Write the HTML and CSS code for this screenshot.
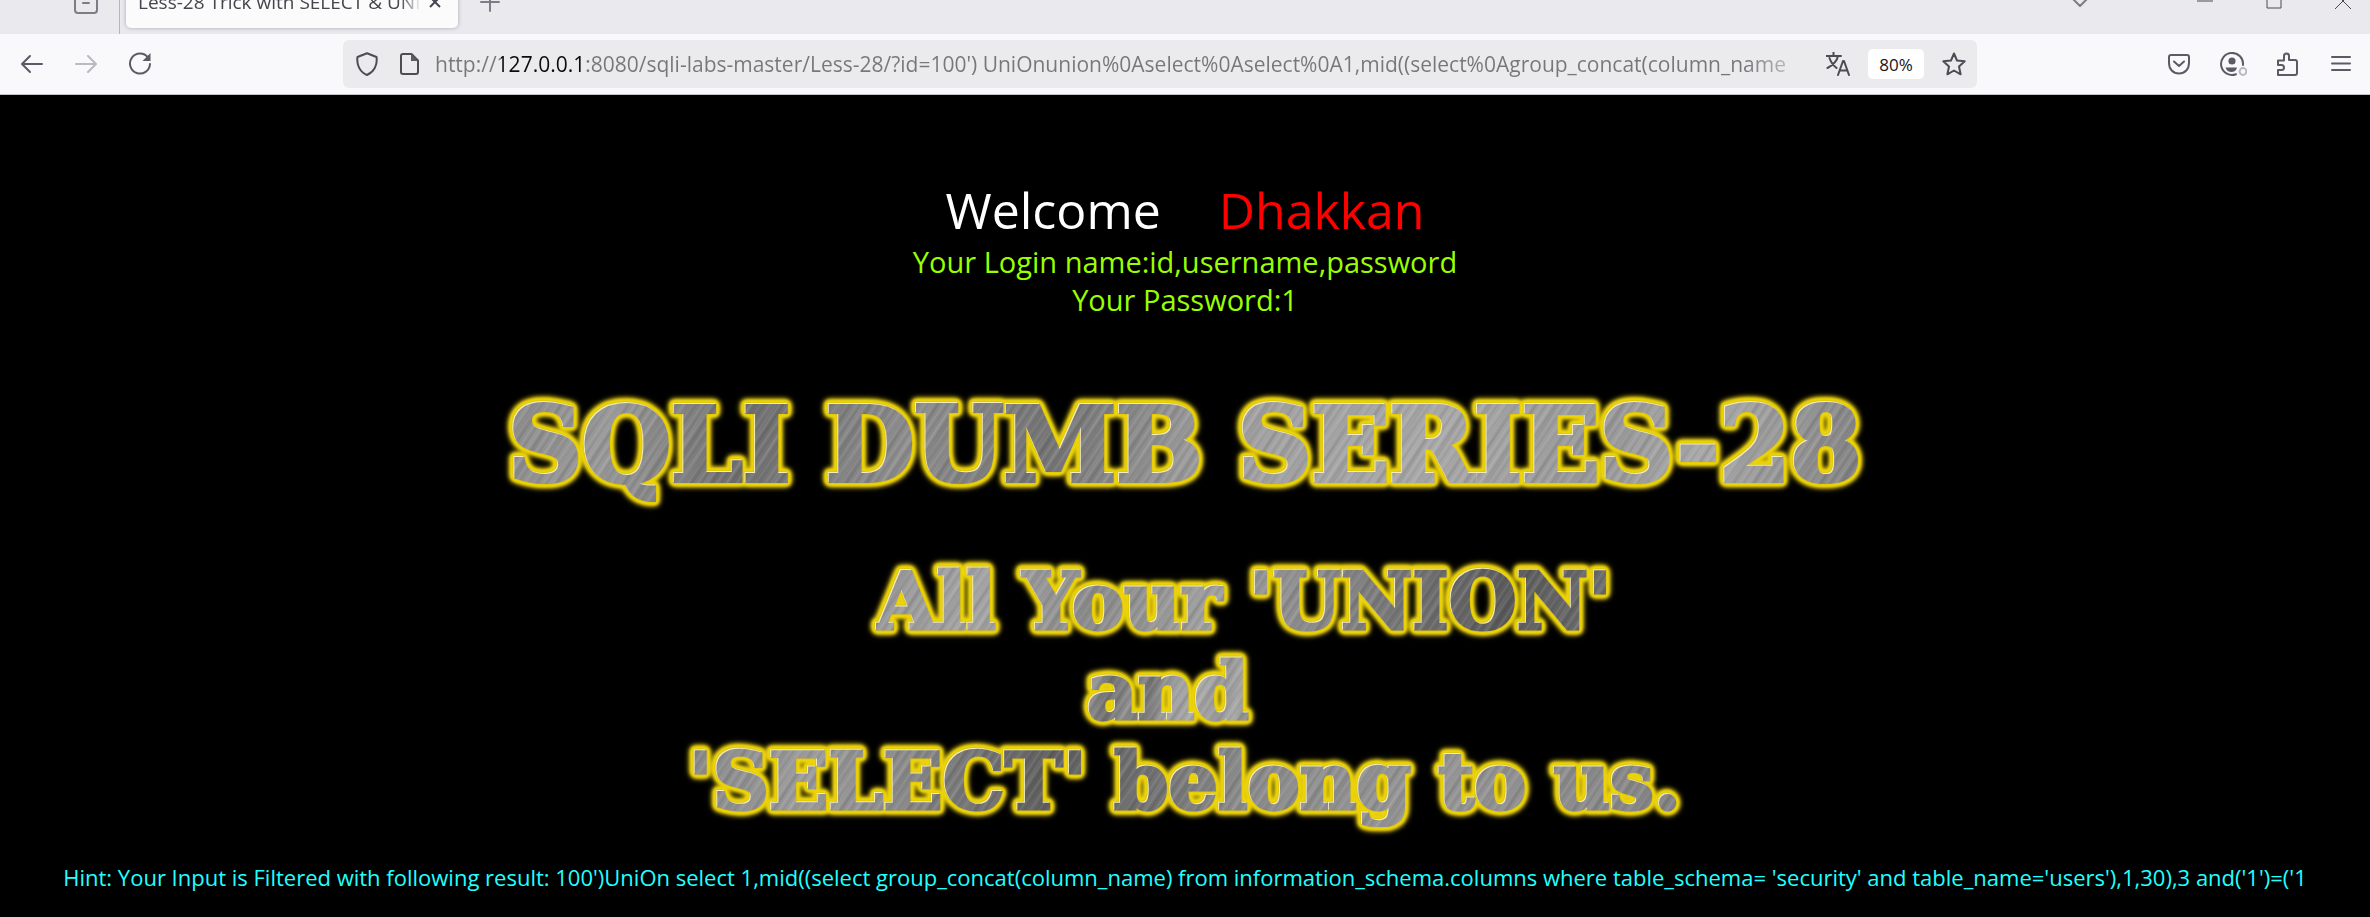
FILE: index.html
```
<!DOCTYPE html>
<html lang="en">
<head>
<meta charset="utf-8">
<title>Less-28 Trick with SELECT &amp; UNION</title>
<link rel="stylesheet" href="styles.css">
</head>
<body>
<header class="browser">
  <div class="tabstrip">
    <div class="tabrow">
      <button class="tool recent" aria-label="Recent browsing"><svg class="icon dim" viewBox="0 0 24 24"><rect x="1" y="1" width="22" height="22" rx="3"/><path d="M1 7h22M9 13h6"/></svg></button>
      <div class="tab">
        <span class="tab-title">Less-28 Trick with SELECT &amp; UNION</span>
        <button class="tab-close" aria-label="Close tab"><svg viewBox="0 0 12 12"><path d="M1 1l10 10M11 1L1 11"/></svg></button>
      </div>
      <button class="tool newtab" aria-label="New tab"><svg class="icon dim" viewBox="0 0 24 24"><path d="M12 3v18M3 12h18"/></svg></button>
      <div class="window-controls">
        <button class="alltabs" aria-label="List all tabs"><svg class="icon dim" viewBox="0 0 24 24"><path d="M5 9l7 7 7-7"/></svg></button>
        <button aria-label="Minimize"><svg class="icon thin" viewBox="0 0 24 24"><path d="M4 11h16"/></svg></button>
        <button aria-label="Maximize"><svg class="icon thin" viewBox="0 0 24 24"><path d="M5 5h14v13H5z"/></svg></button>
        <button aria-label="Close"><svg class="icon thin" viewBox="0 0 24 24"><path d="M4 3l16 16M20 3L4 19"/></svg></button>
      </div>
    </div>
  </div>
  <nav class="navbar">
    <button class="tool" aria-label="Back"><svg class="icon" viewBox="0 0 24 24"><path d="M22 12H2.500M10 4l-8 8 8 8"/></svg></button>
    <button class="tool off" aria-label="Forward"><svg class="icon" viewBox="0 0 24 24"><path d="M2 12h19.500M14 4l8 8-8 8"/></svg></button>
    <button class="tool" aria-label="Reload"><svg class="icon" viewBox="0 0 24 24"><path d="M20 5.500A10 10 0 1 0 22 12"/><path class="solid" d="M22.500 1v8h-8z"/></svg></button>
    <div class="urlbar">
      <button class="field-icon" aria-label="Tracking protection"><svg class="icon" viewBox="0 0 24 24"><path d="M12 1.200L21.500 5c1.200 8-2.500 15-9.500 18C5 20 1.300 13 2.500 5z"/></svg></button>
      <button class="field-icon page" aria-label="Site information"><svg class="icon" viewBox="0 0 24 24"><path d="M6 2h8.500L21 8.500V20a2 2 0 0 1-2 2H6a2 2 0 0 1-2-2V4a2 2 0 0 1 2-2z"/><path class="solid" d="M14 2v7h7z"/></svg></button>
      <input class="address" type="text" aria-label="Address" value="http://127.0.0.1:8080/sqli-labs-master/Less-28/?id=100') UniOnunion%0Aselect%0Aselect%0A1,mid((select%0Agroup_concat(column_name">
      <button class="field-icon" aria-label="Translate page"><svg class="icon" viewBox="0 0 24 24"><path d="M0 4h15M7.500 0v4M12 4C11 9 7 13 1.500 16M3.500 6c1.500 5 4 7.500 7 10M12 23l5-14h1l5 14M13.500 18.500h8"/></svg></button>
      <button class="zoom-level">80%</button>
      <button class="field-icon" aria-label="Bookmark this page"><svg class="icon" viewBox="0 0 24 24"><path d="M12 1.500l3 7 7.700.8-5.700 5.200 1.600 7.800L12 18.500l-6.600 3.800L7 14.500 1.300 9.300 9 8.500z"/></svg></button>
    </div>
    <button class="tool" aria-label="Save to Pocket"><svg class="icon" viewBox="0 0 24 24"><path d="M4 3h16a2 2 0 0 1 2 2v6c0 6-4 10.500-10 10.500S2 17 2 11V5a2 2 0 0 1 2-2zM7 9.500l5 4.500 5-4.500"/></svg></button>
    <button class="tool" aria-label="Account"><svg class="icon wide" viewBox="0 0 28 24"><path d="M24 13a11 11 0 1 0-7 9.200"/><circle class="solid" cx="13" cy="9" r="3.600"/><path class="solid" d="M6.500 15.500h11.500c-1 6-10 6-11.500 0z"/><circle class="ring" cx="24" cy="19.500" r="3.400"/></svg></button>
    <button class="tool" aria-label="Extensions"><svg class="icon" viewBox="0 0 24 24"><path d="M3 8.500h6V4a2.500 2.500 0 0 1 5 0v4h6a2 2 0 0 1 2 2v11a2 2 0 0 1-2 2H3v-5h3.500a2.500 2.500 0 0 0 0-5H3z"/></svg></button>
    <button class="tool" aria-label="Application menu"><svg class="icon" viewBox="0 0 24 24"><path d="M3 5h18M3 11.500h18M3 18h18"/></svg></button>
  </nav>
</header>
<main class="lesson">
  <h1 class="greeting"><span>Welcome</span><span class="name">Dhakkan</span></h1>
  <p class="result">Your Login name:id,username,password<br>Your Password:1</p>
  <h2 class="metal series">SQLI DUMB SERIES-28</h2>
  <div class="slogan">
    <p class="metal first">All Your 'UNION'</p>
    <p class="metal second">and</p>
    <p class="metal third">'SELECT' belong to us.</p>
  </div>
  <p class="hint">Hint: Your Input is Filtered with following result: 100')UniOn select 1,mid((select group_concat(column_name) from information_schema.columns where table_schema= 'security' and table_name='users'),1,30),3 and('1')=('1</p>
</main>
</body>
</html>
```
FILE: styles.css
```
* { box-sizing: border-box; }

body {
  margin: 0;
  background: #000;
  font-family: "Open Sans", "Noto Sans", sans-serif;
}

button {
  border: 0;
  padding: 0;
  background: none;
  font: inherit;
  color: #15141a;
  display: flex;
  align-items: center;
  justify-content: center;
}

.icon {
  width: 24px;
  height: 24px;
  fill: none;
  stroke: #5b5b66;
  stroke-width: 2;
  stroke-linejoin: round;
  stroke-linecap: round;
}
.icon.wide { width: 28px; }
.icon.dim { stroke: #7d7d87; }
.icon.thin { stroke: #4a4a52; stroke-width: 1; stroke-linecap: butt; stroke-linejoin: miter; }
.icon .solid { fill: #5b5b66; stroke: none; }
.icon .ring { stroke: #b9b9bf; }

/* Tab strip: the row is taller than the strip and shows its lower part. */
.tabstrip {
  height: 34px;
  display: flex;
  align-items: flex-end;
  overflow: hidden;
  background: #eae9ee;
}
.tabrow {
  flex: 1;
  height: 64px;
  flex-shrink: 0;
  display: flex;
  align-items: center;
}
.tool { width: 54px; height: 54px; }
.recent {
  width: 120px;
  height: 64px;
  padding-left: 52px;
  border-right: 1px solid #b6b6bd;
}
.tab {
  width: 332px;
  height: 52px;
  margin-left: 6px;
  padding: 0 17px 0 12px;
  display: flex;
  align-items: center;
  gap: 8px;
  border-radius: 5px;
  background: #fbfbfb;
  box-shadow: 0 0 4px #a9a9b2;
}
.tab-title {
  flex: 1;
  overflow: hidden;
  white-space: nowrap;
  font-size: 19px;
  line-height: 28px;
  color: #45454d;
  mask-image: linear-gradient(to left, transparent, #000 20px);
}
.tab-close svg { width: 12px; height: 12px; stroke: #45454d; stroke-width: 2; }
.newtab { margin-left: 5px; }
.window-controls { margin-left: auto; display: flex; padding-right: 15px; }
.window-controls button { width: 24px; margin-left: 45px; }
.window-controls .alltabs { margin-right: 56px; }

.navbar {
  height: 61px;
  padding: 0 2px 0 5px;
  display: flex;
  align-items: center;
  background: #f9f9fb;
  border-bottom: 1px solid #c4c4c8;
}
.off { opacity: .4; }
.urlbar {
  flex: 1;
  min-width: 0;
  height: 48px;
  margin: 0 175px 0 176px;
  padding: 0 11px 0 12px;
  display: flex;
  align-items: center;
  border-radius: 6px;
  background: #ebebed;
}
.field-icon { flex: none; }
.field-icon .icon { stroke: #4c4c55; }
.page { margin-left: 18px; }
.address {
  flex: 1;
  min-width: 0;
  height: 40px;
  margin: 0 8px 0 14px;
  padding: 0;
  border: 0;
  font: 21px/40px "Open Sans", "Noto Sans", sans-serif;
  color: transparent;
  background: linear-gradient(to right, #77777a 66px, #0c0c0d 66px, #0c0c0d 152px, #77777a 152px);
  -webkit-background-clip: text;
  background-clip: text;
  mask-image: linear-gradient(to left, transparent, #000 72px);
}
.zoom-level {
  width: 56px;
  height: 30px;
  margin: 0 18px;
  flex: none;
  border-radius: 5px;
  background: #fff;
  font-size: 17px;
}

.lesson {
  padding: 82px 48px 0;
  text-align: center;
}
.lesson p, .lesson h1, .lesson h2 { margin: 0; }
.greeting {
  display: flex;
  justify-content: center;
  gap: 58px;
  font-size: 50px;
  line-height: 66px;
  font-weight: 400;
  color: #fff;
}
.greeting .name { color: #f00; }
.result {
  font-size: 29px;
  line-height: 38px;
  color: #9f0;
}

/* Brushed steel lettering with a gold glow. */
.metal {
  --brush:
    repeating-linear-gradient(124deg, #fff0 0 2px, #ffffff1a 3px, #fff0 5px, #00000012 7px, #fff0 8px),
    repeating-linear-gradient(121deg, #fff0 0 7px, #ffffff12 9px, #fff0 12px, #00000010 16px, #fff0 19px);
  width: fit-content;
  font-family: "DejaVu Serif", serif;
  font-weight: 700;
  white-space: nowrap;
  color: transparent;
  -webkit-text-stroke: 4px transparent;
  background-image: var(--brush),
    linear-gradient(105deg, #8c8c8c, #9a9a9a 8%, #707070 18%, #8e8e8e 30%, #757575 40%, #a0a0a0 52%, #a8a8a8 68%, #999 80%, #aaa 88%, #808080);
  -webkit-background-clip: text;
  background-clip: text;
  filter:
    drop-shadow(-1px -1px 0 #f3edc0)
    drop-shadow(0 0 1px #c9ae00)
    drop-shadow(0 0 1px #f0d80c)
    drop-shadow(0 0 1px #f0d80c)
    drop-shadow(0 0 1px #f0d80c)
    drop-shadow(0 0 1px #ecd40c)
    drop-shadow(0 0 2px #e4cc10)
    drop-shadow(0 0 2px #d4bc10);
}
.lesson .series {
  margin: 66px auto 0;
  font-size: 102px;
  line-height: 120px;
}
.slogan {
  margin-top: 52px;
  display: flex;
  flex-direction: column;
  align-items: center;
  font-size: 78px;
  line-height: 90px;
}
.slogan .metal { -webkit-text-stroke-width: 3px; }
.lesson .first {
  margin-left: 118px;
  background-image: var(--brush),
    linear-gradient(100deg, #999, #a4a4a4 15%, #8c8c8c 30%, #a0a0a0 45%, #8a8a8a 60%, #777 70%, #5c5c5c 85%, #707070);
}
.lesson .second { margin-right: 34px; }
.lesson .third {
  background-image: var(--brush),
    linear-gradient(100deg, #888, #9c9c9c 12%, #8a8a8a 22%, #606060 36%, #707070 46%, #8c8c8c 56%, #969696 75%, #848484);
}

.hint {
  padding-top: 34px;
  font-size: 22px;
  line-height: 32px;
  white-space: nowrap;
  color: #2ff;
}
```
